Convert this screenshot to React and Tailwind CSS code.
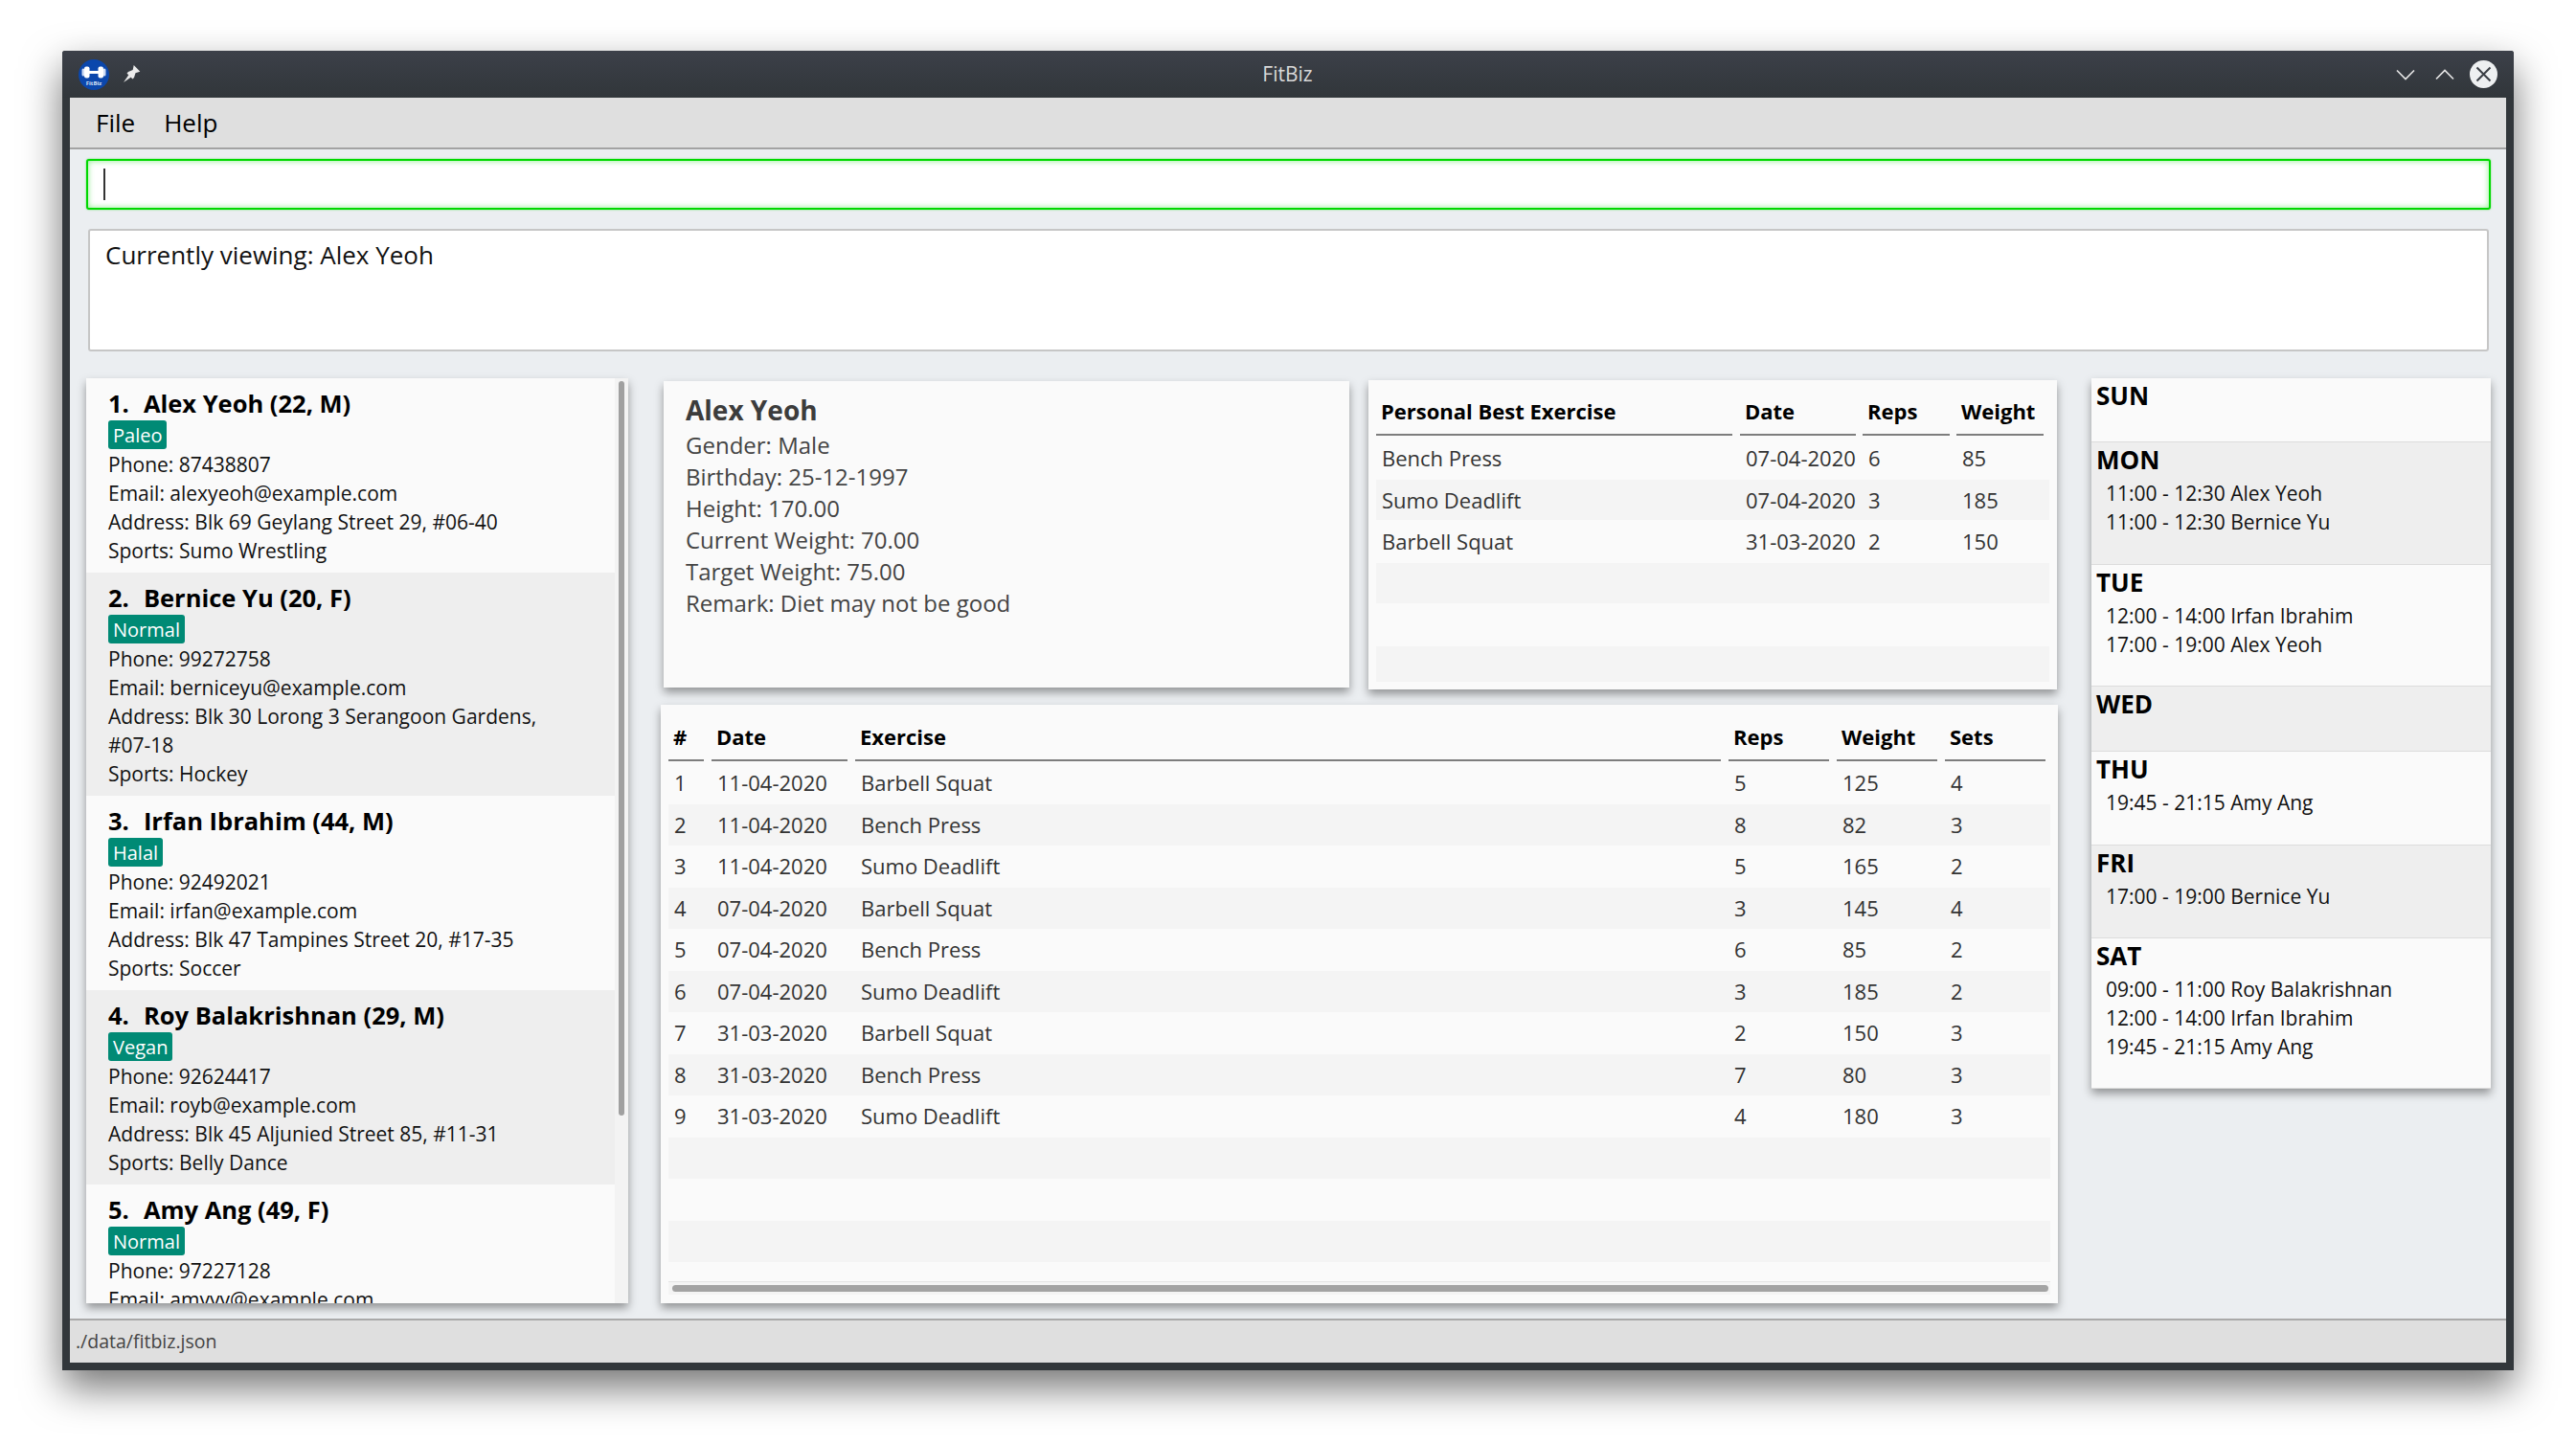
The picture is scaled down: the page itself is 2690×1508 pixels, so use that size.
import React from "react";

const people = [
  { no: 1, name: "Alex Yeoh (22, M)", tag: "Paleo", phone: "87438807", email: "alexyeoh@example.com", address: "Blk 69 Geylang Street 29, #06-40", sports: "Sumo Wrestling" },
  { no: 2, name: "Bernice Yu (20, F)", tag: "Normal", phone: "99272758", email: "berniceyu@example.com", address: "Blk 30 Lorong 3 Serangoon Gardens, #07-18", sports: "Hockey" },
  { no: 3, name: "Irfan Ibrahim (44, M)", tag: "Halal", phone: "92492021", email: "irfan@example.com", address: "Blk 47 Tampines Street 20, #17-35", sports: "Soccer" },
  { no: 4, name: "Roy Balakrishnan (29, M)", tag: "Vegan", phone: "92624417", email: "royb@example.com", address: "Blk 45 Aljunied Street 85, #11-31", sports: "Belly Dance" },
  { no: 5, name: "Amy Ang (49, F)", tag: "Normal", phone: "97227128", email: "amyyy@example.com" },
];

const bests = [
  ["Bench Press", "07-04-2020", "6", "85"],
  ["Sumo Deadlift", "07-04-2020", "3", "185"],
  ["Barbell Squat", "31-03-2020", "2", "150"],
];

const exercises = [
  ["1", "11-04-2020", "Barbell Squat", "5", "125", "4"],
  ["2", "11-04-2020", "Bench Press", "8", "82", "3"],
  ["3", "11-04-2020", "Sumo Deadlift", "5", "165", "2"],
  ["4", "07-04-2020", "Barbell Squat", "3", "145", "4"],
  ["5", "07-04-2020", "Bench Press", "6", "85", "2"],
  ["6", "07-04-2020", "Sumo Deadlift", "3", "185", "2"],
  ["7", "31-03-2020", "Barbell Squat", "2", "150", "3"],
  ["8", "31-03-2020", "Bench Press", "7", "80", "3"],
  ["9", "31-03-2020", "Sumo Deadlift", "4", "180", "3"],
];

const schedule = [
  { day: "SUN", h: "h-[67px]", items: [] },
  { day: "MON", h: "h-[128px]", items: ["11:00 - 12:30 Alex Yeoh", "11:00 - 12:30 Bernice Yu"] },
  { day: "TUE", h: "h-[127px]", items: ["12:00 - 14:00 Irfan Ibrahim", "17:00 - 19:00 Alex Yeoh"] },
  { day: "WED", h: "h-[68px]", items: [] },
  { day: "THU", h: "h-[98px]", items: ["19:45 - 21:15 Amy Ang"] },
  { day: "FRI", h: "h-[97px]", items: ["17:00 - 19:00 Bernice Yu"] },
  { day: "SAT", h: "h-[157px]", items: ["09:00 - 11:00 Roy Balakrishnan", "12:00 - 14:00 Irfan Ibrahim", "19:45 - 21:15 Amy Ang"] },
];

const panelShadow = "shadow-[0_5px_9px_rgba(0,0,0,0.38)]";

function Logo() {
  return (
    <svg width="32" height="32" viewBox="0 0 32 32" className="shrink-0">
      <circle cx="16" cy="16" r="16" fill="#0b47ac" />
      <rect x="3.5" y="9.5" width="3" height="8" rx="1.5" fill="#cfdcf3" />
      <rect x="25.5" y="9.5" width="3" height="8" rx="1.5" fill="#cfdcf3" />
      <rect x="6" y="7.5" width="5.5" height="12" rx="2" fill="#fff" />
      <rect x="20.5" y="7.5" width="5.5" height="12" rx="2" fill="#fff" />
      <rect x="11" y="12" width="10" height="3" fill="#fff" />
      <text x="16" y="26.5" textAnchor="middle" fontSize="6" fontWeight="700" fill="#d7e2f6" fontFamily="'Open Sans',sans-serif">FitBiz</text>
    </svg>
  );
}

function PersonCard({ person }) {
  return (
    <div className="pl-[23px] pr-2 pt-[9px] h-full">
      <div className="text-[25.5px] leading-[34px] font-bold text-black whitespace-nowrap">
        <span className="mr-[15px]">{person.no}.</span>
        {person.name}
      </div>
      <div className="mt-[1px] mb-[1px] w-fit rounded-[3px] bg-[#008a75] px-[5px] h-[30px] leading-[31px] text-[20px] text-white">{person.tag}</div>
      <div className="text-[21px] leading-[30px] text-[#111]">
        <div>Phone: {person.phone}</div>
        <div>Email: {person.email}</div>
        {person.address && <div className="w-[470px]">Address: {person.address}</div>}
        {person.sports && <div>Sports: {person.sports}</div>}
      </div>
    </div>
  );
}

function HeaderCell({ children, className }) {
  return (
    <div className={`h-full border-b-2 border-[#7d7d7d] px-[5px] flex items-center text-[22px] font-bold text-black whitespace-nowrap ${className}`}>
      {children}
    </div>
  );
}

function DataRow({ cols, gridClass, odd, h }) {
  return (
    <div className={`grid ${gridClass} ${h} items-center text-[22px] text-[#333] ${odd ? "bg-[#f4f4f4]" : ""}`}>
      {cols.map((c, i) => (
        <div key={i} className="pl-[6px] pr-[4px] whitespace-nowrap">{c}</div>
      ))}
    </div>
  );
}

export default function App() {
  const pbGrid = "grid-cols-[372px_8px_121px_7px_91px_7px_91px]";
  const exGrid = "grid-cols-[37px_8px_142px_8px_904px_8px_105px_8px_105px_8px_105px]";
  const withGaps = (cols) => cols.flatMap((c, i) => (i ? ["", c] : [c]));

  return (
    <div className="w-[2690px] h-[1508px] bg-white pt-[53px] pl-[65px] font-['Open_Sans',sans-serif] overflow-hidden">
      <div className="w-[2560px] h-[1378px] flex flex-col bg-[#32373b] rounded-t-[3px] shadow-[0_18px_42px_rgba(0,0,0,0.55)]">
        {/* window title bar */}
        <div className="h-[49px] shrink-0 flex items-center pl-[17px] pr-[17px] bg-gradient-to-b from-[#3c4049] to-[#31363a] rounded-t-[3px]">
          <Logo />
          <svg width="18" height="18" viewBox="0 0 18 18" className="ml-[15px] mt-[-2px]">
            <path d="M10.7 0l6.6 6.7-4.8 1.6L11 13l-1.5 1.5-6-6L5 7l4.7-2z" fill="#ececec" />
            <path d="M5.5 10L0 18l8-5.5z" fill="#ececec" />
          </svg>
          <div className="flex-1 text-center text-[21px] text-[#d8d8d8] pl-[40px] mt-[1px]">FitBiz</div>
          <svg width="20" height="12" viewBox="0 0 20 12" className="mr-[21px]">
            <path d="M1 1.5l9 9 9-9" fill="none" stroke="#e8e8e8" strokeWidth="1.6" />
          </svg>
          <svg width="20" height="12" viewBox="0 0 20 12" className="mr-[16px]">
            <path d="M1 10.5l9-9 9 9" fill="none" stroke="#e8e8e8" strokeWidth="1.6" />
          </svg>
          <svg width="29" height="29" viewBox="0 0 29 29">
            <circle cx="14.5" cy="14.5" r="14.5" fill="#eef0f1" />
            <path d="M7.5 7.5l14 14M21.5 7.5l-14 14" stroke="#3a3f45" strokeWidth="2" />
          </svg>
        </div>

        <div className="mx-[8px] w-[2544px] flex-1 flex flex-col bg-[#ebeef1]">
          {/* menu */}
          <div className="h-[54px] shrink-0 bg-[#dfdfdf] border-b-2 border-[#a3a3a3] flex items-center gap-[30px] pl-[27px] text-[26px] text-black">
            <span>File</span>
            <span>Help</span>
          </div>

          {/* command box */}
          <div className="mt-[10px] ml-[17px] w-[2511px] h-[53px] shrink-0 rounded-[3px] border-2 border-[#00d800] bg-white shadow-[inset_0_0_6px_rgba(0,216,0,0.45),0_0_2px_rgba(0,216,0,0.6)] flex items-center pl-[16px]">
            <div className="w-[2px] h-[33px] bg-[#333]" />
          </div>

          {/* result box */}
          <div className="mt-[20px] ml-[19px] w-[2507px] h-[128px] shrink-0 rounded-[3px] border-2 border-[#c6c6c6] bg-white pl-[16px] pt-[8px] text-[26px] leading-[34px] text-[#111]">
            Currently viewing: Alex Yeoh
          </div>

          {/* panels */}
          <div className="mt-[28px] ml-[17px] flex items-start">
            {/* person list */}
            <div className={`w-[566px] h-[966px] flex bg-[#f3f3f3] ${panelShadow} overflow-hidden`}>
              <div className="w-[552px] shrink-0">
                {people.map((p, i) => (
                  <div
                    key={p.no}
                    className={`overflow-hidden ${["h-[203px]", "h-[233px]", "h-[203px]", "h-[203px]", "h-[124px]"][i]} ${i % 2 ? "bg-[#eeeeee]" : "bg-[#fafafa]"}`}
                  >
                    <PersonCard person={p} />
                  </div>
                ))}
              </div>
              <div className="ml-[4px] mt-[3px] w-[6px] h-[767px] rounded-full bg-[#a0a0a0]" />
            </div>

            <div className="ml-[34px] w-[1459px]">
              <div className="flex items-start">
                {/* profile */}
                <div className={`ml-[3px] w-[716px] h-[320px] mt-[3px] bg-[#fafafa] ${panelShadow} pl-[23px] pt-[11px] text-[#444]`}>
                  <div className="text-[28px] leading-[38px] font-bold text-[#3c3c3c]">Alex Yeoh</div>
                  <div className="text-[24px] leading-[33px] mt-[1px]">
                    <div>Gender: Male</div>
                    <div>Birthday: 25-12-1997</div>
                    <div>Height: 170.00</div>
                    <div>Current Weight: 70.00</div>
                    <div>Target Weight: 75.00</div>
                    <div>Remark: Diet may not be good</div>
                  </div>
                </div>

                {/* personal bests */}
                <div className={`ml-[20px] mt-[2px] w-[719px] h-[323px] bg-[#fafafa] ${panelShadow} px-[8px] pt-[8px]`}>
                  <div className={`grid ${pbGrid} h-[50px]`}>
                    <HeaderCell>Personal Best Exercise</HeaderCell><div />
                    <HeaderCell>Date</HeaderCell><div />
                    <HeaderCell>Reps</HeaderCell><div />
                    <HeaderCell>Weight</HeaderCell>
                  </div>
                  {[...bests, ["", "", "", ""], ["", "", "", ""], ["", "", "", ""]].map((row, i) => (
                    <DataRow
                      key={i}
                      cols={withGaps(row)}
                      gridClass={pbGrid}
                      odd={i % 2 === 1}
                      h={["h-[46px]", "h-[42px]", "h-[45px]", "h-[42px]", "h-[45px]", "h-[37px]"][i]}
                    />
                  ))}
                </div>
              </div>

              {/* exercise log */}
              <div className={`mt-[16px] h-[625px] bg-[#fafafa] ${panelShadow} px-[8px] pt-[9px]`}>
                <div className={`grid ${exGrid} h-[50px]`}>
                  <HeaderCell>#</HeaderCell><div />
                  <HeaderCell>Date</HeaderCell><div />
                  <HeaderCell>Exercise</HeaderCell><div />
                  <HeaderCell>Reps</HeaderCell><div />
                  <HeaderCell>Weight</HeaderCell><div />
                  <HeaderCell>Sets</HeaderCell>
                </div>
                <div className="pt-[1px]">
                  {[...exercises, ...Array(3).fill(["", "", "", "", "", ""])].map((row, i) => (
                    <DataRow key={i} cols={withGaps(row)} gridClass={exGrid} odd={i % 2 === 1} h="h-[43.5px]" />
                  ))}
                </div>
                <div className="mt-[20px] h-[14px] bg-[#f4f4f4] border-t border-[#e4e4e4] flex items-center pl-[4px] pr-[2px]">
                  <div className="h-[7px] w-full rounded-full bg-[#a3a3a3]" />
                </div>
              </div>
            </div>

            {/* schedule */}
            <div className={`ml-[35px] w-[417px] ${panelShadow}`}>
              {schedule.map((d, i) => (
                <div
                  key={d.day}
                  className={`${d.h} border-b border-[#dcdcdc] pl-[5px] ${i % 2 ? "bg-[#eeeeee]" : "bg-[#fafafa]"}`}
                >
                  <div className="text-[26px] leading-[36px] font-bold text-black">{d.day}</div>
                  <div className="pl-[10px] pt-[2px] text-[21px] leading-[30px] text-[#111]">
                    {d.items.map((t) => (
                      <div key={t}>{t}</div>
                    ))}
                  </div>
                </div>
              ))}
            </div>
          </div>

          {/* status bar */}
          <div className="mt-auto h-[46px] shrink-0 bg-[#dfdfdf] border-t-2 border-[#a9a9a9] pl-[6px] flex items-center text-[19.5px] text-[#444]">
            ./data/fitbiz.json
          </div>
        </div>
        <div className="h-[8px] shrink-0" />
      </div>
    </div>
  );
}
